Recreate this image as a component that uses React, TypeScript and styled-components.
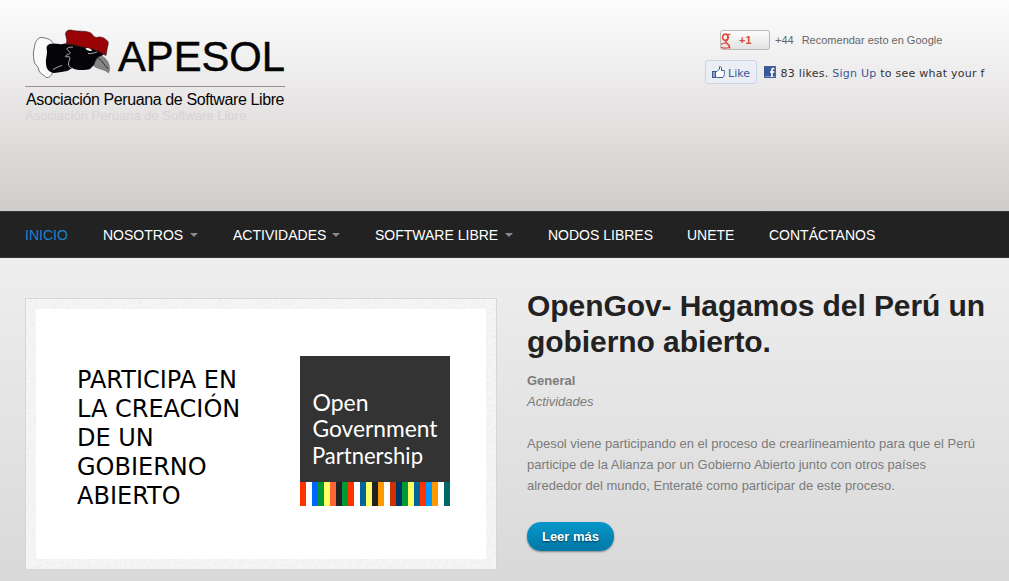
import React from 'react';
import styled, { createGlobalStyle } from 'styled-components';

const GlobalStyle = createGlobalStyle`
  * { box-sizing: border-box; }
  body {
    margin: 0;
    overflow: hidden;
    font-family: "Liberation Sans", Arial, sans-serif;
    font-size: 13px;
    line-height: 21px;
    color: #7b7b7b;
    background: #dadada;
  }
  a { color: inherit; text-decoration: none; }
`;

const Page = styled.div`
  display: flex;
  flex-direction: column;
  width: 1009px;
  height: 581px;
  overflow: hidden;
`;

const Header = styled.header`
  display: flex;
  justify-content: space-between;
  align-items: flex-start;
  height: 211px;
  padding: 25px 24px 0 25px;
  background: linear-gradient(#fdfdfd, #d1cccc);
`;

const Brand = styled.a`
  display: flex;
  flex-direction: column;
  width: 262px;
`;

const LogoDrawing = styled.svg`
  display: block;
  overflow: visible;
`;

const Slogan = styled.span`
  height: 16px;
  line-height: 14px;
  color: #d5d3d5;
  white-space: nowrap;
`;

const Social = styled.div`
  display: flex;
  flex-direction: column;
  gap: 10px;
  width: 280px;
  padding-top: 5px;
`;

const PlusRow = styled.div`
  display: flex;
  align-items: center;
  height: 20px;
  padding-left: 15px;
  font-size: 11px;
  color: #666;
  white-space: nowrap;
`;

const PlusButton = styled.span`
  display: flex;
  align-items: center;
  width: 50px;
  height: 20px;
  margin-right: 5px;
  border: 1px solid #b9b9b9;
  border-radius: 3px;
  background: linear-gradient(#fcfcfc, #e2e2e2);
  color: #dd4b39;
  font-size: 11px;
  font-weight: bold;
  svg { margin-right: 8px; }
`;

const PlusCount = styled.span`
  margin-right: 8px;
`;

const LikeRow = styled.div`
  display: flex;
  align-items: center;
  height: 24px;
  font-family: "DejaVu Sans", sans-serif;
  font-size: 11px;
  color: #333;
  white-space: nowrap;
`;

const LikeButton = styled.span`
  display: flex;
  align-items: center;
  gap: 3px;
  width: 52px;
  height: 24px;
  margin-right: 7px;
  padding: 0 0 0 6px;
  border: 1px solid #cad4e7;
  border-radius: 3px;
  background: #eceef5;
  color: #3b5998;
`;

const LikeLabel = styled.span`
  padding-top: 2px;
`;

const LikeText = styled.span`
  width: 206px;
  margin: 2px 0 0 5px;
  letter-spacing: 0.25px;
  a { color: #3b5998; }
`;

const Nav = styled.nav`
  display: flex;
  align-items: center;
  gap: 35px;
  height: 47px;
  padding: 0 25px;
  border-top: 1px solid #343434;
  border-bottom: 1px solid #343434;
  background: #222;
`;

const NavItem = styled.a<{ $active?: boolean; $width: number }>`
  display: flex;
  align-items: center;
  justify-content: space-between;
  width: ${p => p.$width}px;
  padding-top: 1px;
  font-size: 14px;
  white-space: nowrap;
  color: ${p => (p.$active ? '#1b83d0' : '#fff')};
`;

const Caret = styled.i`
  width: 0;
  height: 0;
  border: 4px solid transparent;
  border-top-color: #8b8b8b;
  border-bottom: 0;
`;

const Main = styled.main`
  display: grid;
  grid-template-columns: 472px 1fr;
  column-gap: 30px;
  align-items: start;
  flex: 1;
  padding: 40px 20px 0 25px;
  background: linear-gradient(#eee, #d9d9d9);
`;

const Frame = styled.div`
  position: relative;
  width: 472px;
  height: 272px;
  padding: 10px;
  border: 1px solid #d6d6d6;
  background: #f3f3f3;
`;

const Grain = styled.svg`
  position: absolute;
  inset: 0;
  width: 100%;
  height: 100%;
  opacity: 0.22;
`;

const Slide = styled.div`
  position: relative;
  display: flex;
  align-items: flex-start;
  justify-content: space-between;
  width: 450px;
  height: 250px;
  padding: 47px 36px 0 41px;
  background: #fff;
`;

const SlideText = styled.p`
  margin: 10px 0 0;
  font-family: "DejaVu Sans", sans-serif;
  font-size: 24px;
  line-height: 29px;
  color: #000;
  white-space: nowrap;
`;

const Partnership = styled.svg`
  display: block;
`;

const Article = styled.article`
  margin-top: -10px;
`;

const Title = styled.h1`
  margin: 0 0 10px;
  font-size: 30px;
  line-height: 36px;
  font-weight: bold;
  letter-spacing: -0.07px;
  color: #222;
  white-space: nowrap;
`;

const Meta = styled.div`
  font-weight: bold;
`;

const Category = styled.div`
  font-style: italic;
`;

const Summary = styled.p`
  margin: 21px 0 26px;
  white-space: nowrap;
`;

const MoreButton = styled.a`
  display: flex;
  align-items: center;
  justify-content: center;
  width: 87px;
  height: 29px;
  border-radius: 14px;
  background: linear-gradient(#0797cb, #0278a5);
  box-shadow: 0 1px 2px rgba(0, 0, 0, 0.4);
  && { color: #fff; }
  font-weight: bold;
  text-shadow: 0 1px 2px rgba(0, 0, 0, 0.6);
`;

const stripes = [
  '#ff3300', '#ffffff', '#0066ff', '#009933', '#ffff66', '#ff6633', '#222222', '#009933', '#ff3300',
  '#ffffff', '#006699', '#ffff66', '#222222', '#ff9900', '#ffffff', '#cc3300', '#003366', '#009933',
  '#ffff66', '#006699', '#ff3300', '#0099ff', '#ff9900', '#ffffff', '#006666',
];

const menu = [
  { label: 'INICIO', width: 43, active: true },
  { label: 'NOSOTROS', width: 95, sub: true },
  { label: 'ACTIVIDADES', width: 107, sub: true },
  { label: 'SOFTWARE LIBRE', width: 138, sub: true },
  { label: 'NODOS LIBRES', width: 104 },
  { label: 'UNETE', width: 47 },
  { label: 'CONTÁCTANOS', width: 108 },
];

const Logo = () => (
  <LogoDrawing width="262" height="84" viewBox="0 0 262 84">
    <path
      d="M28 18 C26 14 20 12.5 15 12.5 C10 15 10 20 9 24 C7.500 30 9 34 9.500 38 C12 41 14 43 14 46 C16 50 20 50 21 52.500 C24 53 27 51 28 46"
      fill="#fafafa" stroke="#555" strokeWidth=".8"
    />
    <path
      d="M40 18.500 C36 20 32 18.500 28 18.500 C25 19 22 19 21.500 23 C23 28 20.500 33 21 38 C21 43 23 47 29 48 C35 47.500 38 46.500 42 46 C45 44.500 46 43 48 43.500 C53 45.500 60 45.500 65 44 L69 40 L73 34 L79 29 L70 22 L55 19 Z"
      fill="#050509"
    />
    <path
      d="M40.500 19.500 C43 16 41 13 40.500 9 C41 5 44 4.500 48 5.500 C53 6.500 60 5.500 65 7.500 C68 9 68 12.500 72 12.500 C76 11 80 13 83 16.500 C84 20 82 22 82 25 L81 30.500 C77 29 74 26 70 25 C65 23 60 22.500 55 21.500 C49 20 44 18 40.500 19.500 Z"
      fill="#990305" stroke="#332020" strokeWidth=".6"
    />
    <path d="M69 41 C70 36 72 32 76 31 C80 32 83 36 84 40 C85 43 84.500 46 83.500 48 C80 44 73 44.500 69 41 Z" fill="#858585" stroke="#555" strokeWidth=".5" />
    <path d="M73 33 C78 36 79 40 83 44" fill="none" stroke="#333" strokeWidth="1" />
    <path d="M60.500 23.500 C62 22.500 66 23 67 26 C64 26.500 61.500 25 60.500 23.500 Z" fill="#fff" />
    <path
      d="M48 22 C43 22 40.500 23.500 43 25.500 C46 28 46 28 43 29.500 C39 31 40 32.500 43 31.500 C47 32 43.500 35 43.500 39 C43.500 42 46 43.500 48 43.500 M63 28.500 C66 29 69 28 72 27 M28 44.500 C31 43 33 41.500 37 40.500"
      fill="none" stroke="#d6d6d6" strokeWidth=".8"
    />
    <text x="93" y="45.7" fontFamily="Liberation Sans" fontSize="43" fill="#050505" stroke="#050505" strokeWidth=".5" textLength="167" lengthAdjust="spacingAndGlyphs">APESOL</text>
    <rect x="0" y="61" width="260" height="1" fill="#949194" />
    <text x="1" y="80" fontFamily="Liberation Sans" fontSize="16" fill="#050505" textLength="258.500">Asociación Peruana de Software Libre</text>
  </LogoDrawing>
);

const GoogleG = () => (
  <svg width="10" height="18" viewBox="0 0 10 18" fill="none" stroke="#dd4b39">
    <path d="M2.500 3.300H9.500" strokeWidth="1.100" />
    <ellipse cx="4.300" cy="6.300" rx="2.700" ry="3" strokeWidth="1.500" />
    <path d="M6 3.500C7.500 5 7.500 8 5.500 9.500C4 10.500 4.500 11.300 6 12.300C8 13.500 8.500 15 8.800 17.500" strokeWidth="1.600" />
    <path d="M5 12C3 12 1.500 12.500 0 13.500M0 16.300C2 17.300 5 17.300 8 16.500" strokeWidth="1.200" />
  </svg>
);

const Thumb = () => (
  <svg width="13" height="13" viewBox="0 0 13 13">
    <path d="M3.500 5.500H5L7.500 3V.700C8.500 .300 9.500 .900 9.500 2V4.500H12.300C12.700 5.500 12.500 6.300 12.200 6.800C12.700 7.700 12.400 8.500 12 9C12.200 10 11.700 10.700 11 11.500H5.500L3.500 10.800Z" fill="#fff" stroke="#3b5998" />
    <rect x=".5" y="5.500" width="3" height="6" fill="#93a5cc" stroke="#3b5998" />
  </svg>
);

const FacebookMark = () => (
  <svg width="12" height="12" viewBox="0 0 12 12">
    <rect width="12" height="12" fill="#3b5998" />
    <rect x="1" y="10" width="10" height="1" fill="#8798c1" />
    <path d="M10.500 2.500H9.200C8.300 2.500 8 3 8 3.900V11M6 6H10.500" fill="none" stroke="#fff" strokeWidth="1.700" />
  </svg>
);

export default function App() {
  return (
    <Page>
      <GlobalStyle />
      <Header>
        <Brand href="#">
          <Logo />
          <Slogan>Asociación Peruana de Software Libre</Slogan>
        </Brand>
        <Social>
          <PlusRow>
            <PlusButton><GoogleG />+1</PlusButton>
            <PlusCount>+44</PlusCount>
            <span>Recomendar esto en Google</span>
          </PlusRow>
          <LikeRow>
            <LikeButton><Thumb /><LikeLabel>Like</LikeLabel></LikeButton>
            <FacebookMark />
            <LikeText>83 likes. <a href="#">Sign Up</a> to see what your f</LikeText>
          </LikeRow>
        </Social>
      </Header>
      <Nav>
        {menu.map(item => (
          <NavItem key={item.label} href="#" $active={item.active} $width={item.width}>
            {item.label}
            {item.sub && <Caret />}
          </NavItem>
        ))}
      </Nav>
      <Main>
        <Frame>
          <Grain>
            <filter id="paper">
              <feTurbulence type="fractalNoise" baseFrequency=".28" numOctaves="2" result="noise" />
              <feDiffuseLighting in="noise" surfaceScale=".8" diffuseConstant="1.16" lightingColor="#fff">
                <feDistantLight azimuth="45" elevation="55" />
              </feDiffuseLighting>
            </filter>
            <rect width="100%" height="100%" filter="url(#paper)" />
          </Grain>
          <Slide>
            <SlideText>
              PARTICIPA EN<br />LA CREACIÓN<br />DE UN<br />GOBIERNO<br />ABIERTO
            </SlideText>
            <Partnership width="150" height="150" viewBox="0 0 150 150">
              <rect width="150" height="127" fill="#333" />
              <g fill="#fff" fontFamily="Lato" fontSize="24">
                <text x="12.500" y="54.500" textLength="56" lengthAdjust="spacingAndGlyphs">Open</text>
                <text x="12.500" y="81" textLength="125" lengthAdjust="spacingAndGlyphs">Government</text>
                <text x="12" y="107.500" textLength="111" lengthAdjust="spacingAndGlyphs">Partnership</text>
              </g>
              {stripes.map((color, i) => (
                <rect key={i} x={i * 6} y="126" width="6" height="24" fill={color} />
              ))}
            </Partnership>
          </Slide>
        </Frame>
        <Article>
          <Title>OpenGov- Hagamos del Perú un<br />gobierno abierto.</Title>
          <Meta>General</Meta>
          <Category>Actividades</Category>
          <Summary>
            Apesol viene participando en el proceso de crearlineamiento para que el Perú<br />
            participe de la Alianza por un Gobierno Abierto junto con otros países<br />
            alrededor del mundo, Enteraté como participar de este proceso.
          </Summary>
          <MoreButton href="#">Leer más</MoreButton>
        </Article>
      </Main>
    </Page>
  );
}
